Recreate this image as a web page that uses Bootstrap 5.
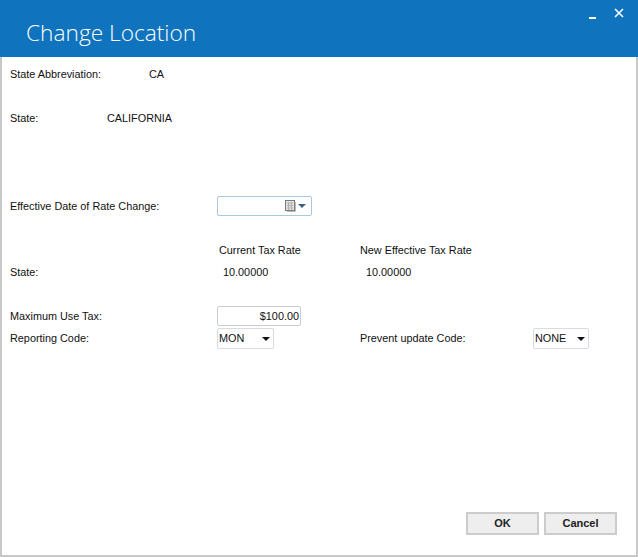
<!DOCTYPE html>
<html lang="en">
<head>
<meta charset="utf-8">
<title>Change Location</title>
<link href="https://cdn.jsdelivr.net/npm/bootstrap@5.3.0/dist/css/bootstrap.min.css" rel="stylesheet">
<style>
html,body{height:100%;}
body{margin:0;background:#fff;color:#111;font:10.85px/14px "Liberation Sans",Arial,sans-serif;}
.dlg{width:638px;height:557px;border:solid #c8c8c8;border-width:0 2px 2px 2px;}
.dlg-head{height:57px;margin:0 -2px;background:#1073bd;color:#fff;padding:0 14px 0 26px;}
.dlg-title{font:300 22.7px/33px "Open Sans",sans-serif;margin:16px 0 0;}
.win-btns{gap:17px;padding-top:8px;}
.dlg-body{padding:10px 0 0 8px;}
.r1{height:14px;}
.r2{margin-top:30px;height:14px;}
.r3{margin-top:71px;height:20px;}
.r4{margin-top:27px;height:14px;}
.r5{margin-top:8px;height:14px;}
.r6{margin-top:27px;height:20px;}
.r7{margin-top:2px;height:21px;}
.r7 .c-lbl,.r7 .c-up{margin-bottom:1px;}
.c-a{width:139px;}
.c-b{width:97px;}
.c-lbl{width:207px;}
.c-cur{width:143px;padding-left:2px;}
.c-val{padding-left:6px;}
.c-up{width:173px;}
.date-box{width:95px;height:20px;border:1px solid #a9c8e2;border-radius:2px;padding-right:5px;}
.money-box{width:84px;height:20px;border:1px solid #c9ccd2;border-radius:2px;padding:0 1px;text-align:right;line-height:18px;color:#111;}
.pick{height:21px;border:1px solid #d8dbe3;border-radius:2px;padding:0 3px 0 1px;line-height:19px;}
.pick-mon{width:57px;margin-right:86px;}
.pick-none{width:56px;}
.caret-dn{width:0;height:0;border-left:4px solid transparent;border-right:4px solid transparent;border-top:4px solid #111;}
.caret-blue{border-top-color:#3d5f80;margin-left:1px;}
.foot{position:absolute;right:19px;bottom:20px;gap:5px;}
.act{width:73px;height:23px;padding:0;background:#eee;border:2px solid #ccc;border-radius:0;font:700 11px/19px "Liberation Sans",Arial,sans-serif;color:#222;}
</style>
</head>
<body>
<div class="dlg position-relative">
  <header class="dlg-head d-flex justify-content-between align-items-start">
    <h1 class="dlg-title">Change Location</h1>
    <div class="win-btns d-flex align-items-start">
      <svg width="8" height="12" viewBox="0 0 8 12"><rect y="9" width="7" height="2" fill="#fff"/></svg>
      <svg width="10" height="10" viewBox="0 0 10 10"><path d="M1 1l8 8M9 1l-8 8" stroke="#fff" stroke-width="1.6" fill="none"/></svg>
    </div>
  </header>
  <main class="dlg-body">
    <div class="r1 d-flex"><div class="c-a">State Abbreviation:</div><div>CA</div></div>
    <div class="r2 d-flex"><div class="c-b">State:</div><div>CALIFORNIA</div></div>
    <div class="r3 d-flex align-items-center"><div class="c-lbl">Effective Date of Rate Change:</div>
      <div class="date-box d-flex align-items-center justify-content-end">
        <svg width="13" height="14" viewBox="0 0 13 14"><rect x="1.5" y="1.5" width="9" height="10" fill="#e4e4e4" stroke="#7a7a7a"/><path d="M3 4h6M3 6.5h6M3 9h6M4.5 3v8M7.5 3v8" stroke="#b0b0b0"/><path d="M11.5 3v9.5H3" stroke="#bbb" fill="none"/></svg>
        <span class="caret-dn caret-blue"></span>
      </div>
    </div>
    <div class="r4 d-flex"><div class="c-lbl"></div><div class="c-cur">Current Tax Rate</div><div>New Effective Tax Rate</div></div>
    <div class="r5 d-flex"><div class="c-lbl">State:</div><div class="c-cur c-val">10.00000</div><div class="c-val">10.00000</div></div>
    <div class="r6 d-flex align-items-center"><div class="c-lbl">Maximum Use Tax:</div><div class="money-box">$100.00</div></div>
    <div class="r7 d-flex align-items-center"><div class="c-lbl">Reporting Code:</div>
      <div class="pick pick-mon d-flex justify-content-between align-items-center">MON<span class="caret-dn"></span></div>
      <div class="c-up">Prevent update Code:</div>
      <div class="pick pick-none d-flex justify-content-between align-items-center">NONE<span class="caret-dn"></span></div>
    </div>
  </main>
  <footer class="foot d-flex">
    <button type="button" class="btn act">OK</button>
    <button type="button" class="btn act">Cancel</button>
  </footer>
</div>
<script src="https://cdn.jsdelivr.net/npm/bootstrap@5.3.0/dist/js/bootstrap.bundle.min.js"></script>
</body>
</html>
